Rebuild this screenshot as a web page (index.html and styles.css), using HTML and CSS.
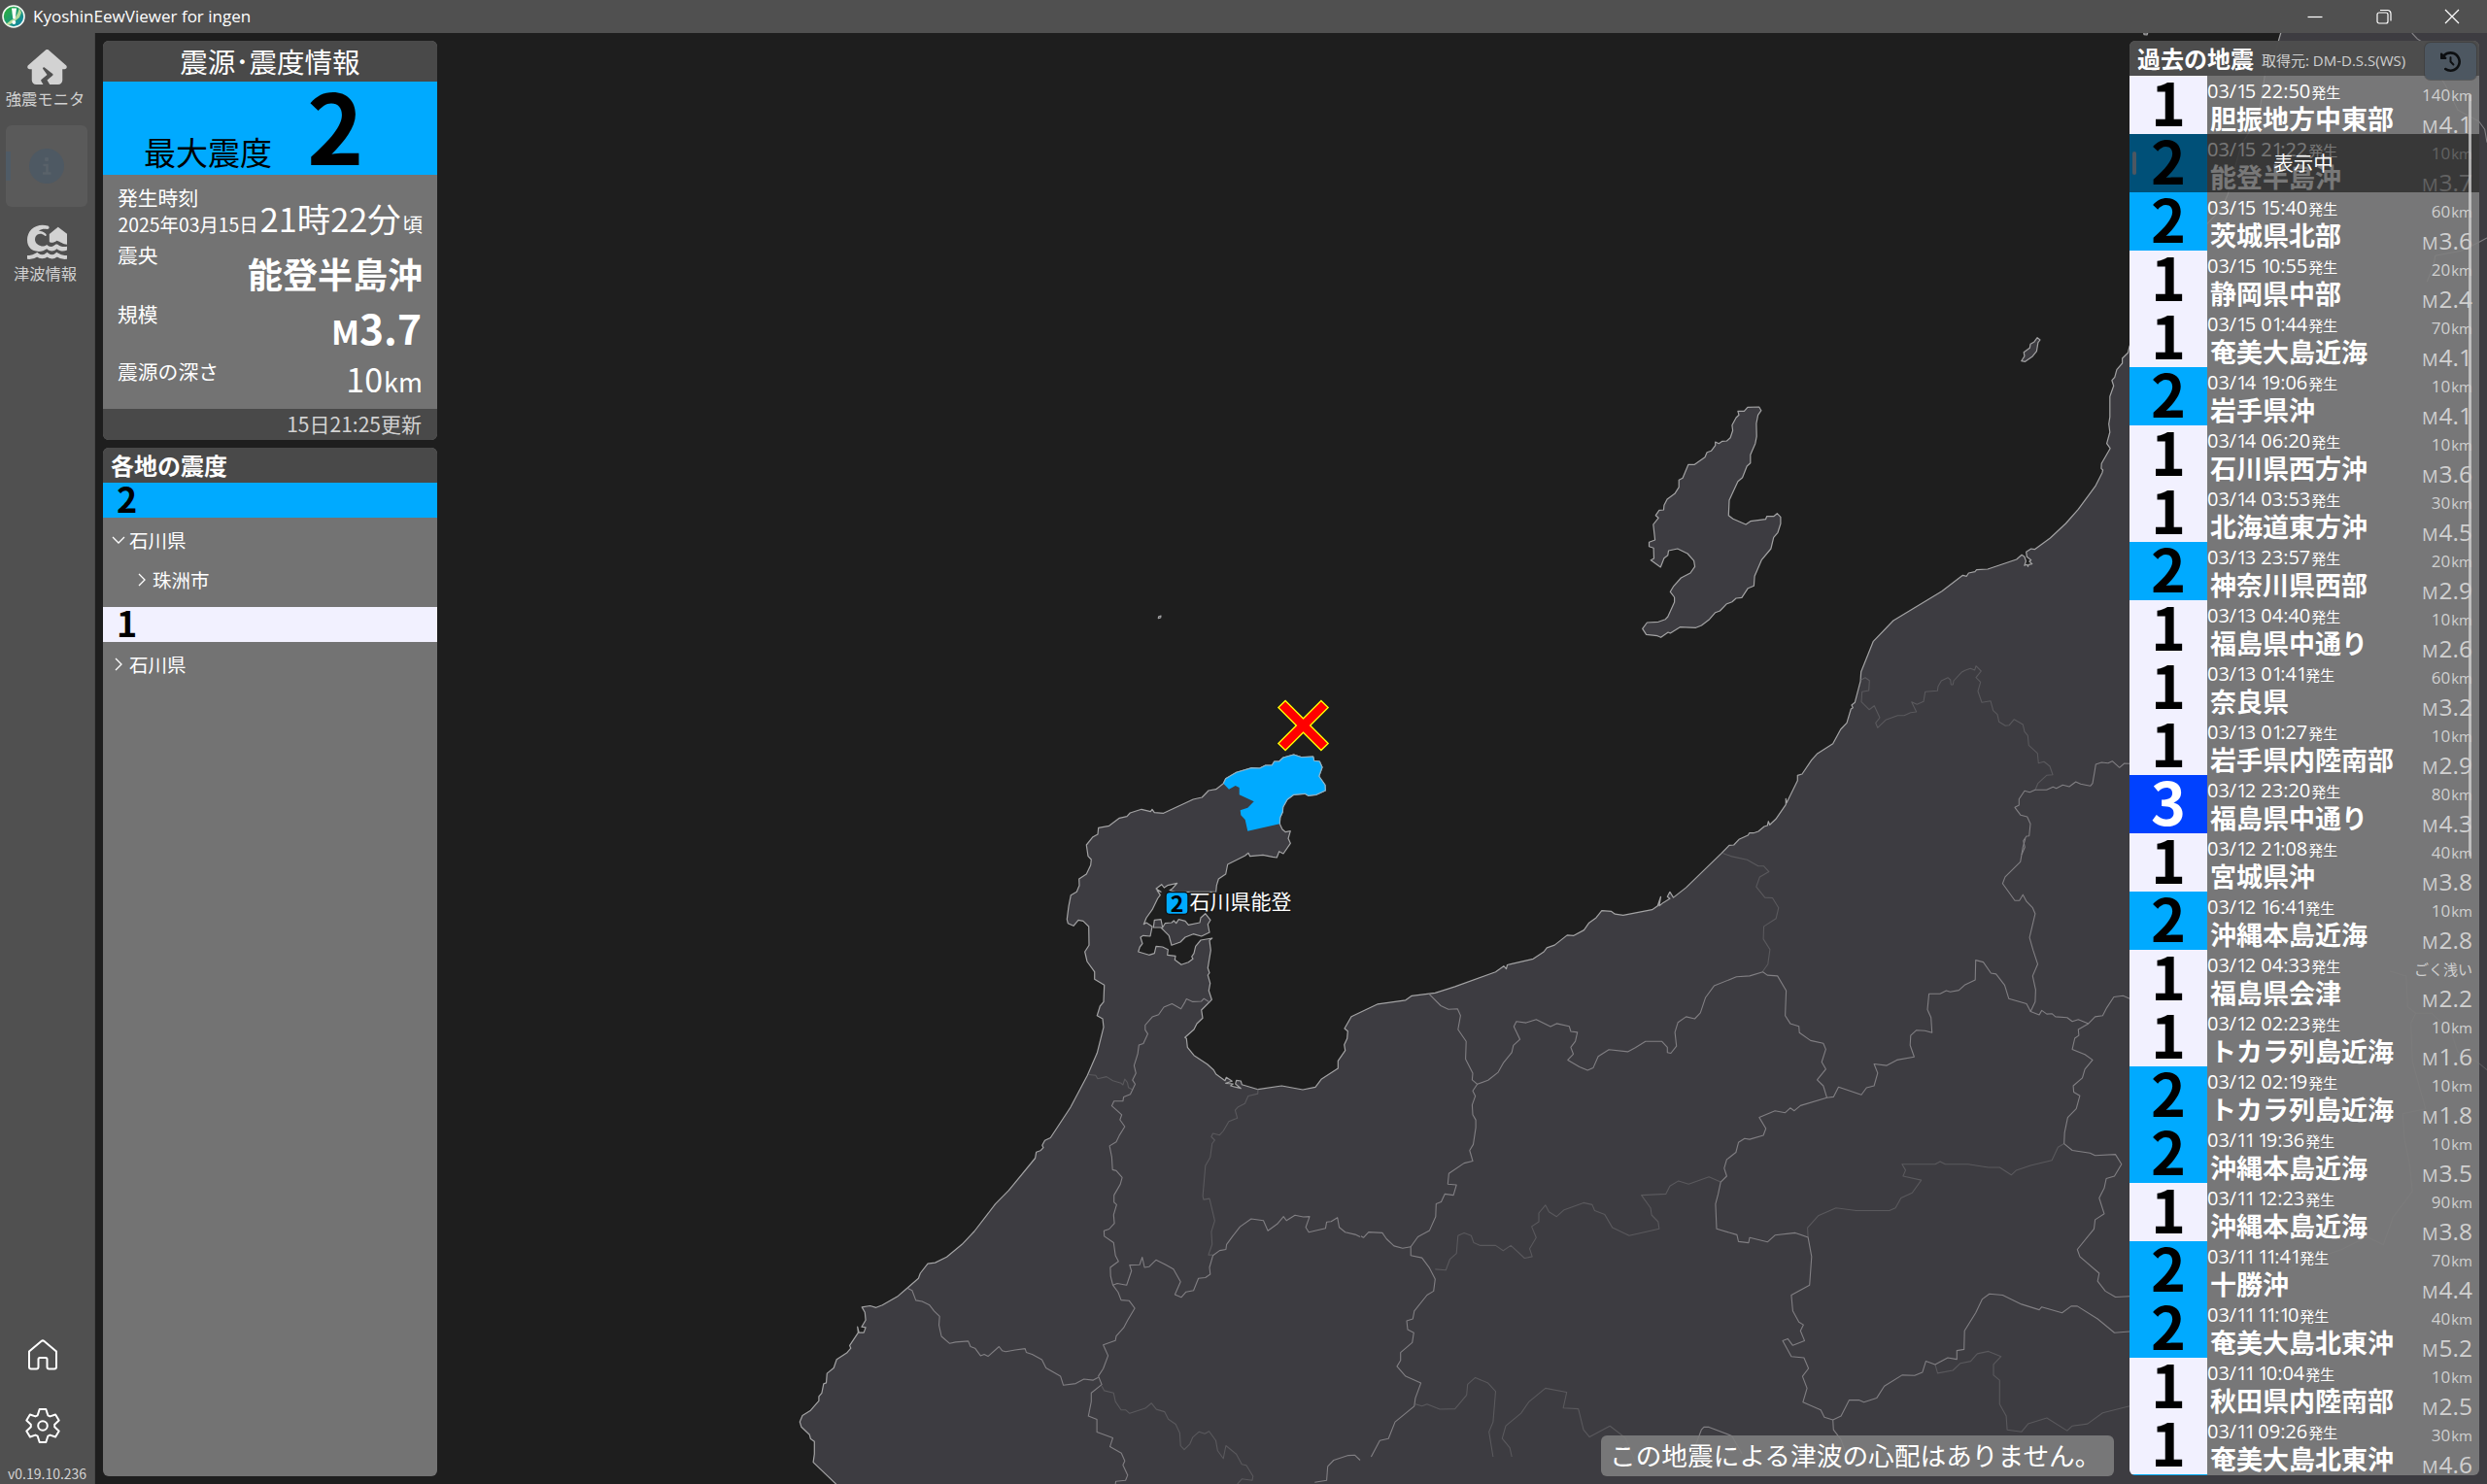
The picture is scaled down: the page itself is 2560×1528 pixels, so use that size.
FILE: index.html
```html
<!DOCTYPE html>
<html lang="ja">
<head>
<meta charset="utf-8">
<title>KyoshinEewViewer for ingen</title>
<link rel="stylesheet" href="styles.css">
</head>
<body>
<div class="window">
  <svg class="map" id="map" viewBox="0 0 2560 1528" width="2560" height="1528"></svg>

  <header class="titlebar">
    <svg class="logo" viewBox="0 0 24 24" width="24" height="24">
      <defs><linearGradient id="lg" x1="0" y1="0" x2="1" y2="1"><stop offset="0" stop-color="#2fb52b"/><stop offset="1" stop-color="#0c7fb8"/></linearGradient></defs>
      <circle cx="12" cy="12" r="11" fill="url(#lg)" stroke="#f4f8f4" stroke-width="1.6"/>
      <path d="M18 3l2 5-2 5-5 4-6 4-3-1 5-4 4-2 3-5z" fill="#cfe6a0" opacity=".85"/>
      <path d="M10 3.5h5l-1.300 11h-2.400z" fill="#fff"/><circle cx="12.300" cy="18" r="2" fill="#fff"/>
    </svg>
    <h1 class="title">KyoshinEewViewer for ingen</h1>
    <div class="winbuttons">
      <svg viewBox="0 0 16 16" width="16" height="16"><path d="M.5 8.500h15"/></svg>
      <svg viewBox="0 0 16 16" width="16" height="16"><rect x="1" y="4" width="11" height="11" rx="2"/><path d="M4 1.500h7.500a3.500 3.500 0 0 1 3.500 3.500v7.500"/></svg>
      <svg viewBox="0 0 16 16" width="16" height="16"><path d="M1 1l14 14M15 1L1 15"/></svg>
    </div>
  </header>

  <div class="body">
    <nav class="sidebar">
      <div class="navitem">
        <svg viewBox="0 0 576 512" width="41" height="36"><path fill="#d2d2d2" d="M543.800 287.600c17 0 32-14 32-32.100c1-9-3-17-11-24L309.500 7c-6-5-14-7-21-7s-15 1-22 8L10 231.500c-7 7-10 15-10 24c0 18 14 32.100 32 32.100h32V448c0 35.300 28.700 64 64 64H230.400l-31.300-52.200c-4.100-6.800-2.600-15.500 3.500-20.500L288 368l-60.200-82.800c-10.900-15 8.200-33.500 22.800-22l117.900 92.600c8 6.300 8.200 18.400 .4 24.900L288 448l38.400 64H448.500c35.500 0 64.200-28.800 64-64.300l-.7-160.200h32z"/></svg>
        <span>強震モニタ</span>
      </div>
      <div class="navitem selected">
        <svg viewBox="0 0 36 36" width="36" height="36"><circle cx="18" cy="18" r="18" fill="#4e5963"/><circle cx="18" cy="11" r="2.200" fill="#59626a"/><path d="M14.500 17h4v8M14 25.500h8.500" fill="none" stroke="#59626a" stroke-width="2.500"/></svg>
      </div>
      <div class="navitem">
        <svg viewBox="0 0 124 108" width="41" height="36" fill="#d2d2d2"><path d="M64 4C30-6 0 16 0 48C0 72 16 84 36 84C46 84 54 81 61 76C72 85 82 85 92 76C102 84 114 85 124 80V68C112 72 102 67 95 62C90 60 88 62 84 65C76 71 68 70 61 63C54 68 47 69 41 66C24 60 22 47 26 38C31 28 44 26 54 34C58 38 62 34 58 29C52 23 44 20 36 19C46 13 54 13 62 15C70 15 70 6 64 4Z"/><path d="M96 8L124 29V62C112 62 103 53 92 50C84 56 76 59 69 54V30Z"/><path d="M3 102C14 103 22 100 31 94C41 102 51 103 62 94C72 102 82 103 92 94C102 101 110 103 121 102" fill="none" stroke="#d2d2d2" stroke-width="12" stroke-linecap="round"/></svg>
        <span>津波情報</span>
      </div>
      <div class="spacer"></div>
      <svg class="tool" viewBox="0 0 36 36" width="36" height="36"><path d="M4 13.500v16q0 2 2 2h5.500q2 0 2-2v-8q0-1.600 1.600-1.600h5.800q1.600 0 1.600 1.600v8q0 2 2 2h5.500q2 0 2-2v-16L19.500 3q-1.500-1.300-3 0z"/></svg>
      <svg class="tool" viewBox="-18 -18 36 36" width="36" height="36"><path d="M-3.300-17H3.300L5.300-10.700 7.500-9.600 13.100-11.500 16.700-5.500 12.200-1.200V1.200L16.700 5.500 13.100 11.500 7.500 9.600 5.300 10.700 3.300 17H-3.300L-5.300 10.700-7.500 9.600-13.100 11.500-16.700 5.500-12.200 1.200V-1.200L-16.700-5.500-13.100-11.500-7.500-9.600-5.300-10.700Z"/><circle r="4.800"/></svg>
      <div class="version">v0.19.10.236</div>
    </nav>

    <section class="left">
      <article class="card summary">
        <h2>震源･震度情報</h2>
        <div class="maxint"><span>最大震度</span><b>2</b></div>
        <dl>
          <div class="field"><dt>発生時刻</dt>
          <dd class="time"><span class="day">2025年03月15日</span><span class="clock">21時22分</span><small>頃</small></dd></div>
          <div class="field tall"><dt>震央</dt><dd class="place">能登半島沖</dd></div>
          <div class="field"><dt>規模</dt><dd class="mag"><small>M</small>3.7</dd></div>
          <div class="field"><dt>震源の深さ</dt><dd class="depth">10<small>km</small></dd></div>
        </dl>
        <footer>15日21:25更新</footer>
      </article>
      <article class="card areas">
        <h3>各地の震度</h3>
        <div class="band i2">2</div>
        <div class="node"><svg viewBox="0 0 14 14" width="14" height="14"><path d="M1 4l6 6 6-6"/></svg>石川県</div>
        <div class="node child"><svg viewBox="0 0 14 14" width="14" height="14"><path d="M4 1l6 6-6 6"/></svg>珠洲市</div>
        <div class="band i1">1</div>
        <div class="node"><svg viewBox="0 0 14 14" width="14" height="14"><path d="M4 1l6 6-6 6"/></svg>石川県</div>
      </article>
    </section>

    <main class="center"><p class="toast">この地震による津波の心配はありません。</p></main>

    <aside class="card history">
      <div class="hhead"><h3>過去の地震</h3><span>取得元: DM-D.S.S(WS)</span>
        <button><svg viewBox="0 0 512 512" width="21" height="21"><path fill="#0d0f11" d="M75 75L41 41C25.900 25.900 0 36.600 0 57.900V168c0 13.300 10.700 24 24 24H134.100c21.400 0 32.100-25.900 17-41l-30.800-30.800C155 85.500 203 64 256 64c106 0 192 86 192 192s-86 192-192 192c-40.800 0-78.600-12.700-109.700-34.400c-14.500-10.100-34.400-6.600-44.600 7.900s-6.600 34.400 7.900 44.600C151.200 495 201.700 512 256 512c141.400 0 256-114.600 256-256S397.400 0 256 0C185.300 0 121.300 28.700 75 75zm181 53c-13.300 0-24 10.700-24 24V256c0 6.400 2.500 12.500 7 17l72 72c9.400 9.400 24.600 9.400 33.900 0s9.400-24.600 0-33.900l-65-65V152c0-13.300-10.700-24-24-24z"/></svg></button>
      </div>
      <div class="rows" id="rows"></div>
      <i class="scroll"></i>
    </aside>
  </div>
</div>
<script src="app.js"></script>
</body>
</html>
```
FILE: styles.css
```css
* { box-sizing: border-box; }
body { margin: 0; background: #1e1e1e; color: #fff; font-family: "Noto Sans CJK JP", "Noto Sans", sans-serif; }
h1, h2, h3, p, dl, dd { margin: 0; font-weight: 400; }
.window { position: relative; width: 2560px; height: 1528px; overflow: hidden; display: flex; flex-direction: column; }
.map { position: absolute; left: 0; top: 0; }
.coast { fill: #3d3c41; stroke: #a3a3a4; stroke-width: 1.200; stroke-linejoin: round; }
.line { fill: none; stroke-width: 1.100; stroke-linejoin: round; }
.major { stroke: #817f83; }
.minor { stroke: #5a595d; }
.hit { fill: #00aaff; }
.maplabel { font-size: 21px; fill: #fff; stroke: #1a1a1a; stroke-width: 3px; paint-order: stroke; }
.mapnum { font-size: 23px; font-weight: 700; text-anchor: middle; fill: #000; }

.titlebar { position: relative; height: 34px; flex: none; background: #505050; display: flex; align-items: center; padding: 0 18px 0 2px; }
.title { font: 17.050px/34px "Open Sans", "Noto Sans", sans-serif; margin-left: 8px; flex: 1; white-space: nowrap; }
.winbuttons { display: flex; gap: 54.500px; margin-right: 10px; }
.winbuttons svg { fill: none; stroke: #fff; stroke-width: 1.200; }

.body { position: relative; flex: 1; display: flex; min-height: 0; }
.sidebar { width: 98px; background: #505050; border-right: 1px solid #484848; display: flex; flex-direction: column; padding: 5px 7px 0 6px; }
.navitem { width: 84px; height: 84px; margin-bottom: 6px; border-radius: 6px; display: flex; flex-direction: column; align-items: center; justify-content: center; gap: 2px; font-size: 16.300px; line-height: 24px; color: #d0d0d0; white-space: nowrap; padding-top: 1px; }
.navitem span { margin-left: -3px; }
.navitem svg { display: block; }
.navitem.selected { padding-top: 0; background: linear-gradient(#4f5b66, #4f5b66) 0 50% / 5px 30px no-repeat #5a5a5a; }
.spacer { flex: 1; }
.tool { align-self: center; margin: 0 0 36px -9px; fill: none; stroke: #fff; stroke-width: 2; stroke-linejoin: round; }
.tool + .tool { margin-bottom: 19px; }
.version { font-size: 14px; line-height: 24px; height: 23px; color: #d4d4d4; white-space: nowrap; padding-left: 2px; }

.card { border-radius: 6px; overflow: hidden; background: rgba(127,127,127,.88); }
.left { width: 344px; margin-left: 8px; padding: 8px 0; display: flex; flex-direction: column; gap: 8px; }
.card h2, .card h3, .hhead, .card footer { background: #494949; }
.summary h2 { height: 42px; line-height: 42px; font-size: 28.500px; text-align: center; }
.maxint { height: 96px; background: #00aaff; color: #000; display: flex; align-items: baseline; padding-left: 42px; }
.maxint span { font-size: 33px; line-height: 86px; }
.maxint b { font-size: 99px; line-height: 86px; margin-left: 36px; }
.summary dl { height: 241px; padding: 8px 15px 0; }
.field { display: grid; height: 59px; }
.field.tall { height: 61px; }
.field > * { grid-area: 1 / 1; }
.summary dt { font-size: 20.800px; line-height: 30px; height: 30px; }
.summary dd { display: flex; justify-content: flex-end; align-items: baseline; white-space: nowrap; height: 59px; }
.summary .time { line-height: 73px; margin-left: -3px; }
.day { font-size: 19.400px; }
.clock { font-size: 34.300px; margin-left: 2px; }
.time small { font-size: 20.500px; margin-left: 2px; }
.summary .place { font-size: 36px; font-weight: 700; line-height: 68px; }
.summary .mag { font-size: 42.500px; font-weight: 700; line-height: 58px; padding-right: 1px; }
.mag small { font-size: 34px; }
.summary .depth { font-size: 34px; line-height: 46px; }
.depth small { font-size: 27px; margin-left: 1px; }
.card footer { height: 32px; line-height: 31px; font-size: 21px; text-align: right; padding-right: 16px; color: #d2d2d2; }
.areas { flex: 1; }
.areas h3 { height: 36px; line-height: 36px; font-size: 24px; font-weight: 700; padding-left: 8px; }
.band { height: 36px; line-height: 31px; font-size: 36px; font-weight: 700; color: #000; padding-left: 14px; }
.i1 { background: #f2f1ff; color: #000; }
.i2 { background: #00aaff; color: #000; }
.i3 { background: #0041ff; color: #fff; }
.node { height: 42px; padding: 3px 0 0 9px; font-size: 19.500px; line-height: 38px; display: flex; align-items: center; gap: 4px; }
.node svg { fill: none; stroke: #fff; stroke-width: 1.300; }
.node.child { padding-left: 33px; padding-top: 2px; margin-bottom: 8px; }

.center { flex: 1; display: flex; justify-content: flex-end; align-items: flex-end; padding: 0 16px 8px; }
.toast { height: 42px; line-height: 39px; width: 528px; padding-left: 9px; font-size: 26.700px; white-space: nowrap; border-radius: 6px; background: rgba(127,127,127,.88); }

.history { position: relative; width: 360px; margin: 8px 8px 9px 0; }
.hhead { height: 36px; display: flex; align-items: center; padding-left: 8px; position: relative; background: rgba(74,74,74,.93) !important; }
.hhead h3 { font-size: 24px; line-height: 36px; font-weight: 700; background: none; white-space: nowrap; }
.hhead span { font: 15px/36px "Open Sans", "Noto Sans CJK JP", sans-serif; color: #d0d0d0; margin: 4px 0 0 8px; white-space: nowrap; }
.hhead button { position: absolute; right: 3px; top: 2px; z-index: 2; width: 53px; height: 38px; border: 0; border-radius: 6px; background: #4d5761; box-shadow: 0 0 0 1px rgba(50,50,50,.4); display: grid; place-items: center; padding: 0; }
.row { height: 60px; display: flex; position: relative; overflow: hidden; }
.int { width: 80px; height: 60px; font-size: 61px; line-height: 51px; font-weight: 700; text-align: center; flex: none; }
.info { flex: 1; white-space: nowrap; }
.when { font: 20px/31px "Open Sans", "Noto Sans", sans-serif; height: 30px; }
.when i { font-style: normal; letter-spacing: -3px; }
.when small { font-family: "Noto Sans CJK JP", sans-serif; font-size: 15px; line-height: 1; margin-left: 1px; }
.name { font-size: 27px; font-weight: 700; line-height: 27px; padding-left: 3px; }
.vals { position: absolute; right: 7px; top: 0; text-align: right; font-family: "Open Sans", "Noto Sans CJK JP", sans-serif; color: #d0d0d0; white-space: nowrap; }
.km { font-size: 17px; line-height: 40px; height: 40px; }
.km small { font-size: 15px; line-height: 1; margin-left: 1px; }
.km.shallow { font-size: 15px; }
.m { font-size: 24.500px; line-height: 20px; }
.m small { font-size: 18.500px; line-height: 1; margin-right: 1px; }
.cover { position: absolute; inset: 0; background: rgba(0,0,0,.53); font-size: 20.500px; line-height: 58px; text-align: center; padding-right: 2px; }
.cover::before { content: ""; position: absolute; left: 3px; top: 18px; width: 4px; height: 24px; border-radius: 2px; background: #4d5761; }
.scroll { position: absolute; left: 349px; top: 55px; width: 3px; height: 785px; border-radius: 2px; background: rgba(205,205,205,.8); }
```
FILE: app.js
```js
// ---- Past earthquakes list: intensity, time, place, depth, magnitude ----
const quakes = [
  [1, '03/15 22:50', '胆振地方中東部', 140, '4.1'],
  [2, '03/15 21:22', '能登半島沖', 10, '3.7'],
  [2, '03/15 15:40', '茨城県北部', 60, '3.6'],
  [1, '03/15 10:55', '静岡県中部', 20, '2.4'],
  [1, '03/15 01:44', '奄美大島近海', 70, '4.1'],
  [2, '03/14 19:06', '岩手県沖', 10, '4.1'],
  [1, '03/14 06:20', '石川県西方沖', 10, '3.6'],
  [1, '03/14 03:53', '北海道東方沖', 30, '4.5'],
  [2, '03/13 23:57', '神奈川県西部', 20, '2.9'],
  [1, '03/13 04:40', '福島県中通り', 10, '2.6'],
  [1, '03/13 01:41', '奈良県', 60, '3.2'],
  [1, '03/13 01:27', '岩手県内陸南部', 10, '2.9'],
  [3, '03/12 23:20', '福島県中通り', 80, '4.3'],
  [1, '03/12 21:08', '宮城県沖', 40, '3.8'],
  [2, '03/12 16:41', '沖縄本島近海', 10, '2.8'],
  [1, '03/12 04:33', '福島県会津', 0, '2.2'],
  [1, '03/12 02:23', 'トカラ列島近海', 10, '1.6'],
  [2, '03/12 02:19', 'トカラ列島近海', 10, '1.8'],
  [2, '03/11 19:36', '沖縄本島近海', 10, '3.5'],
  [1, '03/11 12:23', '沖縄本島近海', 90, '3.8'],
  [2, '03/11 11:41', '十勝沖', 70, '4.4'],
  [2, '03/11 11:10', '奄美大島北東沖', 40, '5.2'],
  [1, '03/11 10:04', '秋田県内陸南部', 10, '2.5'],
  [1, '03/11 09:26', '奄美大島北東沖', 30, '4.6']
];
document.getElementById('rows').innerHTML = quakes.map((q, n) => `
  <div class="row">
    <div class="int i${q[0]}">${q[0]}</div>
    <div class="info"><div class="when">${q[1].replace(/1/g, '<i>1</i>')}<small>発生</small></div><div class="name">${q[2]}</div></div>
    <div class="vals"><div class="km${q[3] ? '' : ' shallow'}">${q[3] ? q[3] + '<small>km</small>' : 'ごく浅い'}</div><div class="m"><small>M</small>${q[4]}</div></div>
    ${n === 1 ? '<div class="cover">表示中</div>' : ''}
  </div>`).join('') + '<div class="row"><div class="int i2"></div></div>';

// ---- Map: each tile has an origin and a scale; points are tile-local ----
const tiles = {
  a: [2160, 0, 3, 3],
  b: [1640, 340, 2.8, 3],
  c: [1780, 640, 3, 3],
  d: [1380, 860, 1.9122, 2.45],
  e: [1080, 700, 3, 3],
  f: [800, 980, 2.6133, 2.8613],
  g: [2180, 1000, 3, 3]
};
const conv = (t, s) => {
  const [ox, oy, sx, sy] = tiles[t];
  return s.trim().split(/\s+/).map(p => {
    const [x, y] = p.split(',').map(Number);
    return (ox + x / sx).toFixed(1) + ',' + (oy + y / sy).toFixed(1);
  }).join(' ');
};
const noto = '712,445 713,425 721,408 722,393 735,370 755,355 790,352 800,358 825,355 853,342 852,325 833,298 843,270 835,252 818,250 815,237 780,239 755,231 723,240 710,252 695,252 688,264 668,264 650,273 625,272 578,286 545,305 538,320';
const coast = [
  ['a', '563,102 555,130 545,170 520,190 500,330 470,400 440,450 410,560 400,600 380,645 335,692 200,800 140,960 96,1070'],
  ['b', '1541,70 1525,87 1525,102 1509,122 1503,145 1495,155 1500,172 1489,205 1489,268 1486,290 1489,315 1480,350 1490,365 1465,412 1464,427 1469,432 1467,440 1447,482 1398,553 1362,597 1317,642 1272,677 1262,675 1248,685 1250,700 1262,710 1257,714 1265,722 1255,724 1253,730 1250,724 1243,727 1247,713 1243,700 1235,694 1220,708 1137,738 1105,740 1100,746 1082,750 1076,760 1065,757 1005,806 865,897'],
  ['c', '445,61 407,155 405,185 388,250 378,258 382,266 376,270 363,313 344,333 320,377 271,409 254,428 225,471 211,475 211,491 177,560 175,547 175,565 144,610 125,628 121,617 118,630 108,633 90,648 75,653 62,653 58,660 30,673 14,690 0,691'],
  ['d', '750,45 680,132 655,157 648,143 643,155 648,160 635,170 627,178 630,155 624,178 613,188 556,202 540,199 533,192 514,190 503,208 489,221 479,239 459,253 446,252 421,277 406,284 400,294 379,312 335,325 328,327 326,337 321,330 305,345 225,382 186,398 140,405 128,416 73,426'],
  ['e', '1015,1001 933,1040 912,1077 922,1085 920,1108 911,1127 914,1145 892,1177 892,1200 840,1234 822,1258 783,1266 718,1254 645,1265 595,1250 592,1239 578,1237 575,1248 592,1262 560,1254 568,1248 545,1246 565,1240 547,1228 543,1238 515,1218 508,1205 488,1187 447,1160 427,1135 424,1108 419,1105 447,1080 456,1062 474,1045 470,1020 502,988 493,960 497,937 490,912 495,905 490,890 499,835 495,805 503,798 468,804 452,823 447,845 440,855 444,862 430,872 408,880 388,865 390,853 365,850 367,833 350,825 330,823 325,845 308,850 275,840 280,825 288,815 282,795 290,790 312,792 318,762 300,750 292,755 300,735 318,710 335,675 343,665 333,650 345,655 330,645 347,632 355,642 365,635 395,628 380,645 372,650 390,655 430,655 515,655 517,635 523,615 545,600 551,570 605,543 615,535 620,545 660,541 690,547 703,549 710,530 723,537 745,505 738,490 745,467 730,470 720,462 ' + noto + ' 515,338 492,342 472,363 445,369 353,412 325,410 318,400 313,407 285,400 250,411 240,422 217,427 185,451 152,457 150,477 135,485 115,510 120,545 130,555 128,572 115,600 92,615 93,635 85,655 67,665 60,700 55,740 58,752 75,760 90,742 105,745 122,762 123,820 110,840 117,870 140,902 140,925 170,943 168,995 157,1008 148,1037 165,1047 168,1073 148,1153 118,1222 66,1320'],
  ['f', '785,465 735,548 720,556 713,570 716,577 708,586 697,590 694,608 623,703 587,743 530,824 497,862 456,899 425,916 405,919 385,947 380,962 350,991 323,1016 283,1041 266,1048 250,1043 228,1047 236,1062 238,1085 227,1105 238,1107 233,1122 220,1122 216,1105 218,1122 195,1160 198,1168 187,1182 160,1201 152,1226 134,1242 132,1270 125,1273 120,1300 112,1310 112,1323 90,1351 68,1366 61,1385 65,1400 87,1423 90,1435 100,1443 100,1480 97,1504 158,1568']
];
const islands = [
  ['b', '445,238 478,237 484,248 475,262 470,288 471,328 467,350 453,385 453,410 443,420 430,455 417,467 392,525 390,572 403,583 440,600 453,590 497,584 500,575 520,575 530,566 540,577 540,598 532,625 520,640 512,675 485,710 465,760 463,790 446,797 428,826 412,828 400,839 385,845 365,867 352,872 335,893 312,912 296,919 250,917 222,936 216,933 195,949 185,944 153,940 142,922 155,903 188,901 208,893 215,885 234,840 234,825 222,808 232,790 253,765 280,750 293,730 290,712 272,690 243,675 217,681 215,695 204,704 194,732 166,710 175,705 174,673 161,668 161,655 178,648 173,600 188,580 180,572 190,556 203,555 204,541 213,522 235,505 247,485 247,463 258,457 274,415 292,415 322,392 328,377 340,373 352,356 352,345 362,350 372,343 385,342 395,332 402,310 400,293 412,270 420,262 417,250 435,250'],
  ['b', '1280,23 1288,30 1282,38 1278,65 1265,82 1245,97 1234,95 1243,80 1241,68 1258,55 1260,43 1270,37'],
  ['e', '325,742 345,740 350,765 358,752 378,750 385,744 392,752 400,740 420,745 430,757 465,750 468,735 482,722 498,742 490,755 495,780 470,792 445,785 420,795 405,810 378,820 370,790 358,778 345,765 322,765'],
  ['e', '338,-196 345,-198 344,-192 337,-190'],
  ['a', '140,102 152,102 150,108 141,107']
];
const major = [
  ['a', '968,102 985,120 1000,130 1030,170 1040,215 1070,260 1110,340 1175,375 1193,400 1200,440'],
  ['a', '1200,735 1176,748 1120,775 1040,790 1035,820 1015,870'],
  ['c', '1236,439 1220,438 1205,451 1183,431 1170,437 1150,435 1132,441 1129,460 1122,500 1115,508 1085,502 1070,495 1050,510 1030,505 1010,515 1000,511 980,520 945,520 928,527 912,523 895,548 895,567 882,574 900,598 920,603 930,625 926,662 918,663 908,677 913,697 903,720'],
  ['d', '174,400 197,430 212,439 230,438 236,455 231,490 247,520 246,565 260,600 259,617 269,628 260,645 265,658 259,680 260,705 266,718 266,738 261,780 254,795 260,822 243,827 213,853 211,880 228,882 222,908 205,905 198,925 188,930 187,962 175,997 152,1013 138,1038 138,1060 160,1066 175,1092 186,1120 183,1150 170,1160 145,1200 142,1220 130,1225 132,1247 144,1255 141,1280 118,1305 118,1325 111,1340 128,1365 158,1382 147,1420 145,1440 107,1480 94,1522 77,1527 60,1568'],
  ['d', '40,1011 45,1015 55,1001 82,1003 90,1018 105,1036 122,1042 138,1038'],
  ['d', '269,628 290,618 310,598 320,575 337,548 340,530 353,515 341,483 346,470 365,473 385,465 413,483 425,475 450,482 453,495 466,497 462,520 453,535 458,552 447,567 470,584 486,593 497,587 507,558 528,541 565,546 580,536 600,520 632,520 643,535 643,548 650,550 661,532 658,497 664,472 680,458 697,463 708,448 718,410 735,380 779,357 805,355 831,345 840,353 860,355 877,392 875,455 885,475 902,482 903,498 925,518 950,525 955,540 947,572 955,590 938,617 950,632 957,662 970,660 980,635 1025,655 1035,637 1050,632 1057,600 1050,577 1075,581 1095,567 1129,559 1121,530 1122,505 1133,492 1150,493 1164,498 1162,460 1155,440 1158,400 1180,400 1192,392 1200,395 1217,391 1228,378 1249,365 1250,315 1265,320 1280,348 1290,350 1307,378 1315,412 1350,425 1358,445'],
  ['d', '1348,8 1343,30 1338,67 1308,105 1303,122 1327,165 1336,165 1343,150 1350,167 1362,183 1367,198 1356,258 1363,290 1372,325 1362,355 1368,390 1367,420 1358,445 1375,453 1380,442 1390,451 1400,450 1407,458 1430,460 1440,470 1452,465 1472,475 1485,458 1500,455 1508,435 1522,408 1540,405 1553,412'],
  ['d', '1472,475 1452,490 1453,505 1445,512 1440,540 1465,553 1480,567 1465,590 1460,612 1442,632 1443,648 1455,657 1448,690 1431,712 1425,750 1424,778 1440,795 1475,802 1485,808 1525,805 1537,830 1523,860 1507,866 1503,890 1493,915 1503,955 1485,970 1483,993 1450,1045 1455,1063 1493,1105 1490,1125 1505,1150 1525,1165 1553,1163'],
  ['d', '957,662 905,682 893,695 885,688 875,700 855,695 824,712 837,740 832,757 805,767 795,765 783,775 778,800 760,818 755,840 760,860 748,875 743,905 738,930 740,993 780,1008 783,1025 803,1028 805,1015 840,1026 855,1009 895,1003 920,1014 927,1063 923,1135 887,1160 890,1200 902,1228 911,1235 905,1250 913,1275 890,1287 880,1270 870,1275 887,1315 912,1318 921,1345 909,1365 918,1395 910,1430 945,1450 952,1468 969,1475 970,1500 985,1525 1000,1580'],
  ['d', '969,1475 985,1465 1001,1425 1020,1425 1030,1430 1055,1420 1070,1390 1105,1362 1130,1363 1145,1355 1152,1327 1170,1335 1195,1318 1213,1322 1213,1300 1227,1297 1228,1250 1250,1205 1263,1170 1277,1157 1303,1160 1340,1183 1375,1197 1380,1190 1420,1205 1438,1188 1450,1188 1490,1220 1523,1255 1553,1252'],
  ['d', '690,1568 710,1500 715,1493 725,1493 770,1515 790,1560'],
  ['f', '1164,149 1148,138 1141,146 1118,147 1101,139 1096,150 1086,168 1062,153 1040,163 1026,185 1009,192 990,216 990,230 997,242 985,270 973,275 970,300 960,335 965,358 956,378 963,390 950,420 932,428 930,440 906,440 900,454 927,480 922,495 935,515 920,542 912,560 894,572 900,605 902,642 912,645 928,665 923,685 906,717 906,738 913,745 905,775 907,800 893,817 879,822 880,838 905,857 910,895 918,912 896,930 897,955 903,982 917,1003 925,1026 947,1028 962,1050 943,1085 932,1108 912,1132 910,1145 877,1158 890,1190 877,1228 864,1250 873,1275 845,1300 845,1325 837,1368 860,1378 860,1415 903,1432 895,1458 926,1477 935,1500 930,1512 943,1542 937,1557 911,1560 910,1568'],
  ['f', '350,991 363,998 373,1027 390,1030 410,1041 422,1058 437,1074 435,1100 442,1133 464,1154 480,1150 514,1147 520,1163 532,1168 547,1190 557,1186 567,1192 597,1163 605,1175 615,1178 640,1173 667,1169 670,1180 686,1186 712,1202 723,1226 762,1250 770,1277 803,1272 825,1259 850,1262 864,1254'],
  ['f', '903,982 915,977 940,982 953,940 948,923 975,922 982,900 988,930 1000,928 1019,908 1045,922 1066,935 1085,972 1070,1010 1087,1018 1100,1002 1120,998 1133,962 1152,960 1165,950 1163,930 1172,895 1190,880 1207,877 1209,862 1225,838 1245,810 1275,787 1308,792 1320,822 1345,802 1362,780 1370,792 1393,776 1415,781 1432,780 1422,812 1430,826 1475,815 1478,796 1490,795 1507,783 1512,812 1528,826 1555,833 1568,840'],
  ['f', '1446,1563 1478,1557 1481,1516 1497,1498 1536,1484 1554,1483 1568,1498']
];
const minor = [
  ['c', '407,180 420,173 433,182 431,213 410,217 408,248 432,272 448,260 465,297 452,313 458,328 483,304 520,290 540,290 560,281 578,279 563,248 580,256 600,247 605,217 643,214 645,200 655,183 675,173 683,180 685,195 691,195 693,183 717,157 728,151 745,145 758,150 762,137 778,153 762,173 776,187 768,215 780,250 807,245 815,275 828,287 833,310 853,322 865,320 880,302 907,318 912,340 922,352 925,382 952,407 955,437 972,433 990,447 999,473 980,475 953,500 945,520'],
  ['d', '752,45 768,53 800,62 822,78 833,78 843,92 825,105 818,130 835,157 850,158 862,183 857,210 833,230 832,262 845,288 841,325 830,345'],
  ['d', '186,1095 207,1097 215,1070 228,1055 231,1010 243,1003 257,1010 262,1028 275,1035 305,1035 320,1048 335,1035 362,1067 377,1063 372,1043 385,1015 376,987 390,975 390,953 403,933 410,950 425,962 440,945 478,927 495,932 500,947 520,957 535,990 568,1010 627,993 625,975 612,958 610,940 592,908 640,905 648,885 665,872 685,880 725,862 748,875'],
  ['d', '920,1014 919,990 940,960 975,940 1015,947 1080,947 1092,940 1103,915 1125,902 1143,870 1107,860 1112,845 1105,830 1170,830 1180,823 1190,830 1235,830 1275,838 1297,838 1320,857 1330,845 1358,833 1400,820 1412,787 1424,778'],
  ['d', '1170,1335 1175,1357 1205,1350 1220,1332 1240,1327 1253,1308 1275,1302 1300,1315 1285,1335 1285,1362 1297,1375 1297,1435 1310,1465 1312,1500 1340,1505 1353,1485 1390,1470 1430,1502 1440,1490 1470,1485 1500,1457 1553,1440'],
  ['d', '147,1435 160,1440 170,1435 195,1448 225,1447 248,1412 250,1385 265,1368 290,1382 305,1403 300,1480 292,1505 300,1568'],
  ['d', '337,1568 333,1545 318,1522 325,1490 355,1458 370,1430 403,1395 445,1405 438,1445 468,1447 478,1500 490,1518 530,1490 560,1520 580,1580'],
  ['f', '838,362 857,364 862,374 886,368 903,380 925,387 930,392 935,375 942,385 945,400 957,407'],
  ['f', '1293,405 1293,418 1267,425 1258,447 1240,457 1232,467 1238,490 1215,500 1200,528 1190,540 1172,535 1168,545 1177,555 1170,565 1165,605 1152,630 1145,720 1147,730 1163,727 1177,792 1168,825 1170,862 1160,893 1172,893'],
  ['f', '873,1280 880,1293 905,1300 910,1325 925,1350 938,1350 948,1360 990,1345 1007,1330 1020,1348 1042,1355 1052,1377 1072,1392 1083,1418 1085,1455 1095,1467 1110,1450 1118,1430 1135,1414 1150,1420 1162,1413 1180,1440 1185,1470 1200,1493 1207,1455 1235,1480 1250,1510 1262,1513 1280,1545 1278,1557 1250,1553 1238,1568'],
  ['g', '840,0 890,15 895,110 920,130 905,160 910,280 950,425 880,440 885,520 900,590 910,680 850,760 820,845 770,820 690,860 540,910 430,970 410,1040 300,1100'],
  ['g', '920,130 970,130 1030,190 1050,250 1110,280 1140,305']
];
const edge = '860,1528 860,1540 2570,1540 2570,20 2347,20';
const lines = (set, cls) => set.map(([t, s]) => `<polyline class="line ${cls}" points="${conv(t, s)}"/>`).join('');
document.getElementById('map').innerHTML =
  `<polygon class="coast" points="${coast.map(([t, s]) => conv(t, s)).join(' ')} ${edge}"/>` +
  islands.map(([t, s]) => `<polygon class="coast" points="${conv(t, s)}"/>`).join('') +
  lines(minor, 'minor') + lines(major, 'major') +
  `<polygon class="hit" points="${conv('e', noto + ' 555,338 575,327 587,333 587,355 632,376 613,395 590,403 592,418 605,432 613,467')}"/>` +
  `<polyline class="line" stroke="#8fb4c8" points="${conv('e', noto)}"/>` +
  `<g transform="translate(1341.500 747)"><path d="M-22.500-22.500L22.500 22.500M22.500-22.500L-22.500 22.500" stroke="#ff0" stroke-width="11.600"/><path d="M-21.500-21.500L21.500 21.500M21.500-21.500L-21.500 21.500" stroke="#f00" stroke-width="8.800"/></g>` +
  `<rect x="1200" y="918.500" width="23" height="23" rx="4" fill="#00aaff" stroke="#111" stroke-width="1.500"/>` +
  `<text class="mapnum" x="1211.500" y="938.500">2</text><text class="maplabel" x="1224.500" y="936">石川県能登</text>`;
```
